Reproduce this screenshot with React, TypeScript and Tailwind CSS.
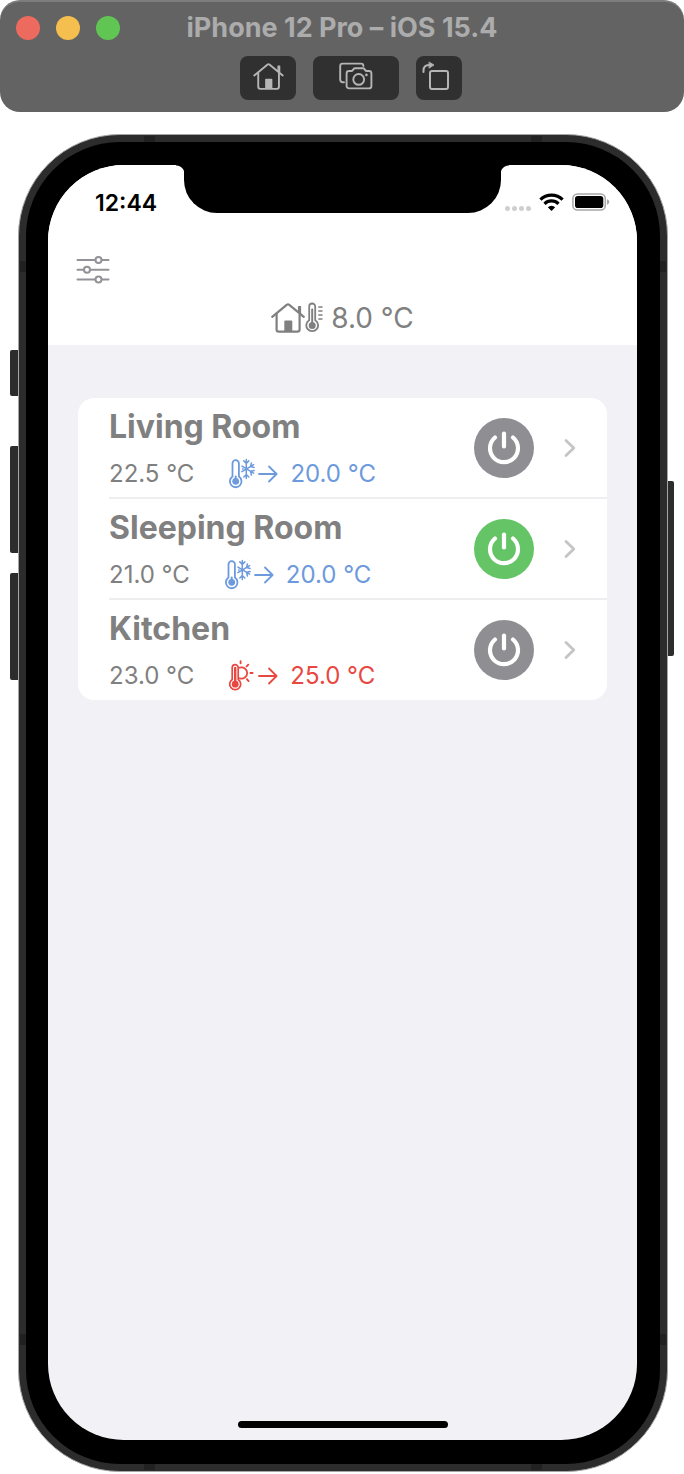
import React, { useState } from "react";

type Mode = "cool" | "heat";

interface Room {
  name: string;
  current: string;
  target: string;
  mode: Mode;
  on: boolean;
}

const initialRooms: Room[] = [
  { name: "Living Room", current: "22.5 °C", target: "20.0 °C", mode: "cool", on: false },
  { name: "Sleeping Room", current: "21.0 °C", target: "20.0 °C", mode: "cool", on: true },
  { name: "Kitchen", current: "23.0 °C", target: "25.0 °C", mode: "heat", on: false },
];

function HouseIcon({ className, strokeWidth }: { className: string; strokeWidth: number }) {
  return (
    <svg viewBox="0 0 34 30" className={className} fill="none" stroke="currentColor" strokeWidth={strokeWidth} strokeLinecap="round" strokeLinejoin="round" aria-hidden="true">
      <path d="M1.2 13.8 16 1.7a1.6 1.6 0 0 1 2 0L32.8 13.8" />
      <path d="M5.6 11.2V26.5a2.2 2.2 0 0 0 2.2 2.2H26.4a2.2 2.2 0 0 0 2.2-2.2V11.2" />
      <path d="M27.6 3.6h1.8v6.6l-1.8-1.5Z" fill="currentColor" strokeWidth="1.4" />
      <path d="M13.3 28.7V18.4a1 1 0 0 1 1-1h6a1 1 0 0 1 1 1V28.7Z" fill="currentColor" stroke="none" />
    </svg>
  );
}

function CamerasIcon() {
  return (
    <svg viewBox="0 0 34 28" className="h-7 w-[34px]" fill="none" stroke="currentColor" strokeWidth="1.9" strokeLinecap="round" strokeLinejoin="round" aria-hidden="true">
      <path d="M5 20.2H3.6A2.4 2.4 0 0 1 1.2 17.8V4A2.4 2.4 0 0 1 3.6 1.6H22A2.4 2.4 0 0 1 24.4 4" />
      <path d="M10 9h2.4c.7 0 1-.3 1.4-.9l.7-1c.4-.6.8-.9 1.5-.9h8c.7 0 1.1.3 1.5.9l.7 1c.4.6.7.9 1.4.9H30a2.4 2.4 0 0 1 2.4 2.4V24a2.4 2.4 0 0 1-2.4 2.4H10A2.4 2.4 0 0 1 7.6 24V11.4A2.4 2.4 0 0 1 10 9Z" />
      <circle cx="19.7" cy="17.4" r="5.4" />
      <circle cx="27.4" cy="12.9" r="1.3" fill="currentColor" stroke="none" />
    </svg>
  );
}

function RotateIcon() {
  return (
    <svg viewBox="0 0 28 30" className="h-[30px] w-7" fill="none" stroke="currentColor" strokeWidth="2" strokeLinecap="round" strokeLinejoin="round" aria-hidden="true">
      <rect x="8" y="10" width="18" height="18" rx="2" />
      <path d="M1.5 11V9.5C1.5 6 3.5 4 7 4H9" />
      <path d="M7.3 1.2 12 4 7.3 7Z" fill="currentColor" strokeWidth="0.8" />
    </svg>
  );
}

function SlidersIcon() {
  return (
    <svg viewBox="0 0 34 28" className="h-7 w-[34px]" fill="none" stroke="currentColor" strokeWidth="2" strokeLinecap="round" aria-hidden="true">
      <path d="M1.5 4H19M26 4h6.5M1.5 13.8H8M15 13.8H32.5M1.5 23.6H19M26 23.6h6.5" />
      <circle cx="22.5" cy="4" r="3" />
      <circle cx="11" cy="13.8" r="3" />
      <circle cx="22.5" cy="23.6" r="3" />
    </svg>
  );
}

function WifiIcon() {
  return (
    <svg viewBox="0 0 25 18" className="h-[18px] w-[25px]" fill="none" stroke="currentColor" strokeWidth="3.2" aria-hidden="true">
      <path d="M1.4 6.7a15.8 15.8 0 0 1 22.2 0" />
      <path d="M5.5 10.8a10 10 0 0 1 14 0" />
      <path d="M12.5 18 8.8 14.2a5.3 5.3 0 0 1 7.4 0Z" fill="currentColor" stroke="none" />
    </svg>
  );
}

function BatteryIcon() {
  return (
    <svg viewBox="0 0 38 18" className="h-[18px] w-[38px]" aria-hidden="true">
      <rect x="0.9" y="0.9" width="32.4" height="16.2" rx="4.6" fill="none" stroke="#a6a6a6" strokeWidth="1.5" />
      <rect x="3" y="3" width="28.3" height="12" rx="2.8" fill="#000" />
      <path d="M35 6.3c1.4.5 2.2 1.5 2.2 2.7S36.4 11.2 35 11.7Z" fill="#a6a6a6" />
    </svg>
  );
}

function ThermometerIcon() {
  return (
    <svg viewBox="0 0 18 32" className="h-8 w-[18px]" fill="none" stroke="currentColor" strokeLinecap="round" aria-hidden="true">
      <path d="M4.2 18.2V4.5a3 3 0 0 1 6 0V18.2a5.9 5.9 0 1 1-6 0Z" strokeWidth="1.8" strokeLinejoin="round" />
      <path d="M7.2 7.5V22" strokeWidth="2" />
      <circle cx="7.2" cy="23.4" r="3.5" fill="currentColor" stroke="none" />
      <path d="M13.8 5h3.2M13.8 9h3.2M13.8 13h3.2M13.8 17h3.2" strokeWidth="1.5" />
    </svg>
  );
}

function ThermometerSnowIcon() {
  return (
    <svg viewBox="0 0 27 32" className="h-8 w-[27px]" fill="none" stroke="currentColor" strokeLinecap="round" strokeLinejoin="round" aria-hidden="true">
      <path d="M4.5 18.6V5.4a3.2 3.2 0 0 1 6.4 0V18.6a5.8 5.8 0 1 1-6.4 0Z" strokeWidth="1.8" />
      <path d="M7.7 18.5V22" strokeWidth="2" />
      <circle cx="7.7" cy="23.3" r="3.4" fill="currentColor" stroke="none" />
      <path d="M18.3 1.5V20.5M14 8.1 25.6 15.1M14 13.7 25.6 6.7M15.8 2.9l2.5 2.5 2.5-2.5M15.8 19l2.5-2.5 2.5 2.5M23.4 4.9l-.8 3.6 3.5.9M23.4 17l-.8-3.7 3.5-.9M14.6 11h.5" strokeWidth="1.5" />
    </svg>
  );
}

function ThermometerSunIcon() {
  return (
    <svg viewBox="0 0 27 32" className="h-8 w-[27px]" fill="none" stroke="currentColor" strokeLinecap="round" strokeLinejoin="round" aria-hidden="true">
      <path d="M4.2 19.5V7.6a3 3 0 0 1 6 0V19.5a5.5 5.5 0 1 1-6 0Z" strokeWidth="1.7" />
      <path d="M7.2 8V23" strokeWidth="2.4" />
      <circle cx="7.2" cy="24.2" r="3.4" fill="currentColor" stroke="none" />
      <path d="M11.8 7.7a5.6 5.6 0 1 1 0 10.6" strokeWidth="1.8" />
      <path d="M12.6 1.3V3.3M18.6 6.4 20.3 4.7M22.4 13h2.2M18.9 19.2l1.7 1.9" strokeWidth="1.9" />
    </svg>
  );
}

function ArrowIcon() {
  return (
    <svg viewBox="0 0 20 18" className="h-[18px] w-5" fill="none" stroke="currentColor" strokeWidth="1.8" strokeLinecap="round" strokeLinejoin="round" aria-hidden="true">
      <path d="M1 9H18.5M11 1.5 18.6 9 11 16.5" />
    </svg>
  );
}

function PowerIcon() {
  return (
    <svg viewBox="0 0 60 60" className="h-full w-full" fill="none" stroke="#fff" strokeWidth="4.2" strokeLinecap="round" aria-hidden="true">
      <path d="M21 19.5a14 14 0 1 0 18 0" />
      <path d="M30 15.5V28.5" />
    </svg>
  );
}

function ChevronIcon() {
  return (
    <svg viewBox="0 0 12 20" className="h-5 w-3" fill="none" stroke="#c5c5c7" strokeWidth="2.8" strokeLinecap="round" strokeLinejoin="round" aria-hidden="true">
      <path d="M2 2.4 9.8 10 2 17.6" />
    </svg>
  );
}

function TitleBar() {
  const tool = "flex h-11 items-center justify-center rounded-lg bg-[#303030] pb-1 text-[#b5b5b5]";
  return (
    <header className="grid h-28 grid-cols-[1fr_auto_1fr] content-start rounded-[20px] border-t-2 border-[#7c7c7c] bg-[#636363] px-4">
      <div className="flex items-center gap-4">
        <button type="button" aria-label="Close" className="size-6 rounded-full bg-[#ed6a5e]" />
        <button type="button" aria-label="Minimize" className="size-6 rounded-full bg-[#f5bf4f]" />
        <button type="button" aria-label="Zoom" className="size-6 rounded-full bg-[#61c554]" />
      </div>
      <h1 className="text-[27px] leading-[52px] font-bold text-[#acacac]">iPhone 12 Pro – iOS 15.4</h1>
      <div className="col-span-3 mt-[2px] flex justify-center gap-[17px] pl-[18px]">
        <button type="button" aria-label="Home" className={`${tool} w-14`}>
          <HouseIcon className="h-[27px] w-[31px]" strokeWidth={2.1} />
        </button>
        <button type="button" aria-label="Screenshot" className={`${tool} w-[86px]`}>
          <CamerasIcon />
        </button>
        <button type="button" aria-label="Rotate" className={`${tool} w-[46px] pr-[6px]`}>
          <RotateIcon />
        </button>
      </div>
    </header>
  );
}

function AntennaBands() {
  return (
    <div aria-hidden="true">
      <span className="absolute top-px left-[125px] h-[6px] w-[11px] bg-[#212121]" />
      <span className="absolute top-px right-[125px] h-[6px] w-[11px] bg-[#212121]" />
      <span className="absolute bottom-px left-[125px] h-[6px] w-[11px] bg-[#212121]" />
      <span className="absolute right-[125px] bottom-px h-[6px] w-[11px] bg-[#212121]" />
      <span className="absolute top-[126px] left-px h-[11px] w-[6px] bg-[#212121]" />
      <span className="absolute top-[126px] right-px h-[11px] w-[6px] bg-[#212121]" />
      <span className="absolute bottom-[126px] left-px h-[11px] w-[6px] bg-[#212121]" />
      <span className="absolute right-px bottom-[126px] h-[11px] w-[6px] bg-[#212121]" />
    </div>
  );
}

function StatusBar() {
  return (
    <div className="grid grid-cols-[136px_1fr_136px] items-start">
      <time className="pt-[26px] pl-[47px] text-[23px] leading-6 font-semibold text-black">12:44</time>
      <div className="flex items-start">
        <div className="-mr-px -ml-2 size-[9px] shrink-0 bg-[radial-gradient(circle_at_0_100%,transparent_8px,#000_9px)]" />
        <div className="h-12 flex-1 rounded-b-[33px] bg-black" />
        <div className="-mr-2 -ml-px size-[9px] shrink-0 bg-[radial-gradient(circle_at_100%_100%,transparent_8px,#000_9px)]" />
      </div>
      <div className="flex items-end pt-7 pl-1">
        <div className="flex gap-[2px]">
          <span className="size-[5px] rounded-full bg-[#cfcfcf]" />
          <span className="size-[5px] rounded-full bg-[#cfcfcf]" />
          <span className="size-[5px] rounded-full bg-[#cfcfcf]" />
          <span className="size-[5px] rounded-full bg-[#cfcfcf]" />
        </div>
        <div className="ml-2">
          <WifiIcon />
        </div>
        <div className="ml-2">
          <BatteryIcon />
        </div>
      </div>
    </div>
  );
}

function RoomRow({ room, onToggle }: { room: Room; onToggle: () => void }) {
  return (
    <li className="ml-[31px] flex items-center border-b-2 border-[#eeeef0] pr-[31px] last:border-b-0 last:pb-px">
      <div className="flex-1 pt-[6px]">
        <h2 className="text-[32px] leading-[46px] font-bold text-[#808080]">{room.name}</h2>
        <div className="mt-px flex items-center text-[24px] leading-[46px] font-normal text-[#808080]">
          <span>{room.current}</span>
          <span className={room.mode === "cool" ? "ml-[34px] flex items-center text-[#6d9add]" : "ml-[34px] flex items-center text-[#e8483f]"}>
            {room.mode === "cool" ? <ThermometerSnowIcon /> : <ThermometerSunIcon />}
            <span className="mr-3 ml-[3px]">
              <ArrowIcon />
            </span>
            {room.target}
          </span>
        </div>
      </div>
      <button
        type="button"
        aria-label={`Power ${room.name}`}
        aria-pressed={room.on}
        onClick={onToggle}
        className={room.on ? "size-[60px] rounded-full bg-[#65c466]" : "size-[60px] rounded-full bg-[#8e8e93]"}
      >
        <PowerIcon />
      </button>
      <a href="#room" aria-label={`Open ${room.name}`} className="ml-[30px]">
        <ChevronIcon />
      </a>
    </li>
  );
}

export default function App() {
  const [rooms, setRooms] = useState(initialRooms);
  const toggle = (index: number) =>
    setRooms(rooms.map((room, i) => (i === index ? { ...room, on: !room.on } : room)));

  return (
    <div className="flex min-h-screen flex-col bg-white pb-[2px] font-['Inter','Liberation_Sans',sans-serif]">
      <TitleBar />
      <div className="relative mt-[22px] mr-4 ml-[18px] flex flex-1 flex-col rounded-[102px] border border-[#a5a5a5] bg-[#2c2c2c] p-[7px]">
        <AntennaBands />
        <span className="absolute top-[215px] -left-[9px] h-[46px] w-2 rounded-l-[2px] bg-[#2c2c2c]" />
        <span className="absolute top-[311px] -left-[9px] h-[107px] w-2 rounded-l-[2px] bg-[#2c2c2c]" />
        <span className="absolute top-[438px] -left-[9px] h-[107px] w-2 rounded-l-[2px] bg-[#2c2c2c]" />
        <span className="absolute top-[346px] -right-[7px] h-[175px] w-[6px] rounded-r-[2px] bg-[#2c2c2c]" />
        <div className="flex flex-1 flex-col rounded-[94px] bg-black pt-[23px] pr-[23px] pb-6 pl-[22px]">
          <main className="flex flex-1 flex-col overflow-hidden rounded-[76px] bg-[#f2f1f6]">
            <div className="bg-white pb-[9px]">
              <StatusBar />
              <button type="button" aria-label="Settings" className="mt-[41px] ml-7 block text-[#929297]">
                <SlidersIcon />
              </button>
              <div className="mt-4 flex items-center justify-center text-[#808080]">
                <HouseIcon className="h-[30px] w-[34px]" strokeWidth={2.2} />
                <ThermometerIcon />
                <span className="ml-2 text-[28px] leading-9 font-normal">8.0 °C</span>
              </div>
            </div>
            <ul className="mx-[30px] mt-[53px] overflow-hidden rounded-2xl bg-white">
              {rooms.map((room, i) => (
                <RoomRow key={room.name} room={room} onToggle={() => toggle(i)} />
              ))}
            </ul>
            <div className="mx-auto mt-auto mb-3 h-[7px] w-[210px] rounded-full bg-black" />
          </main>
        </div>
      </div>
    </div>
  );
}
